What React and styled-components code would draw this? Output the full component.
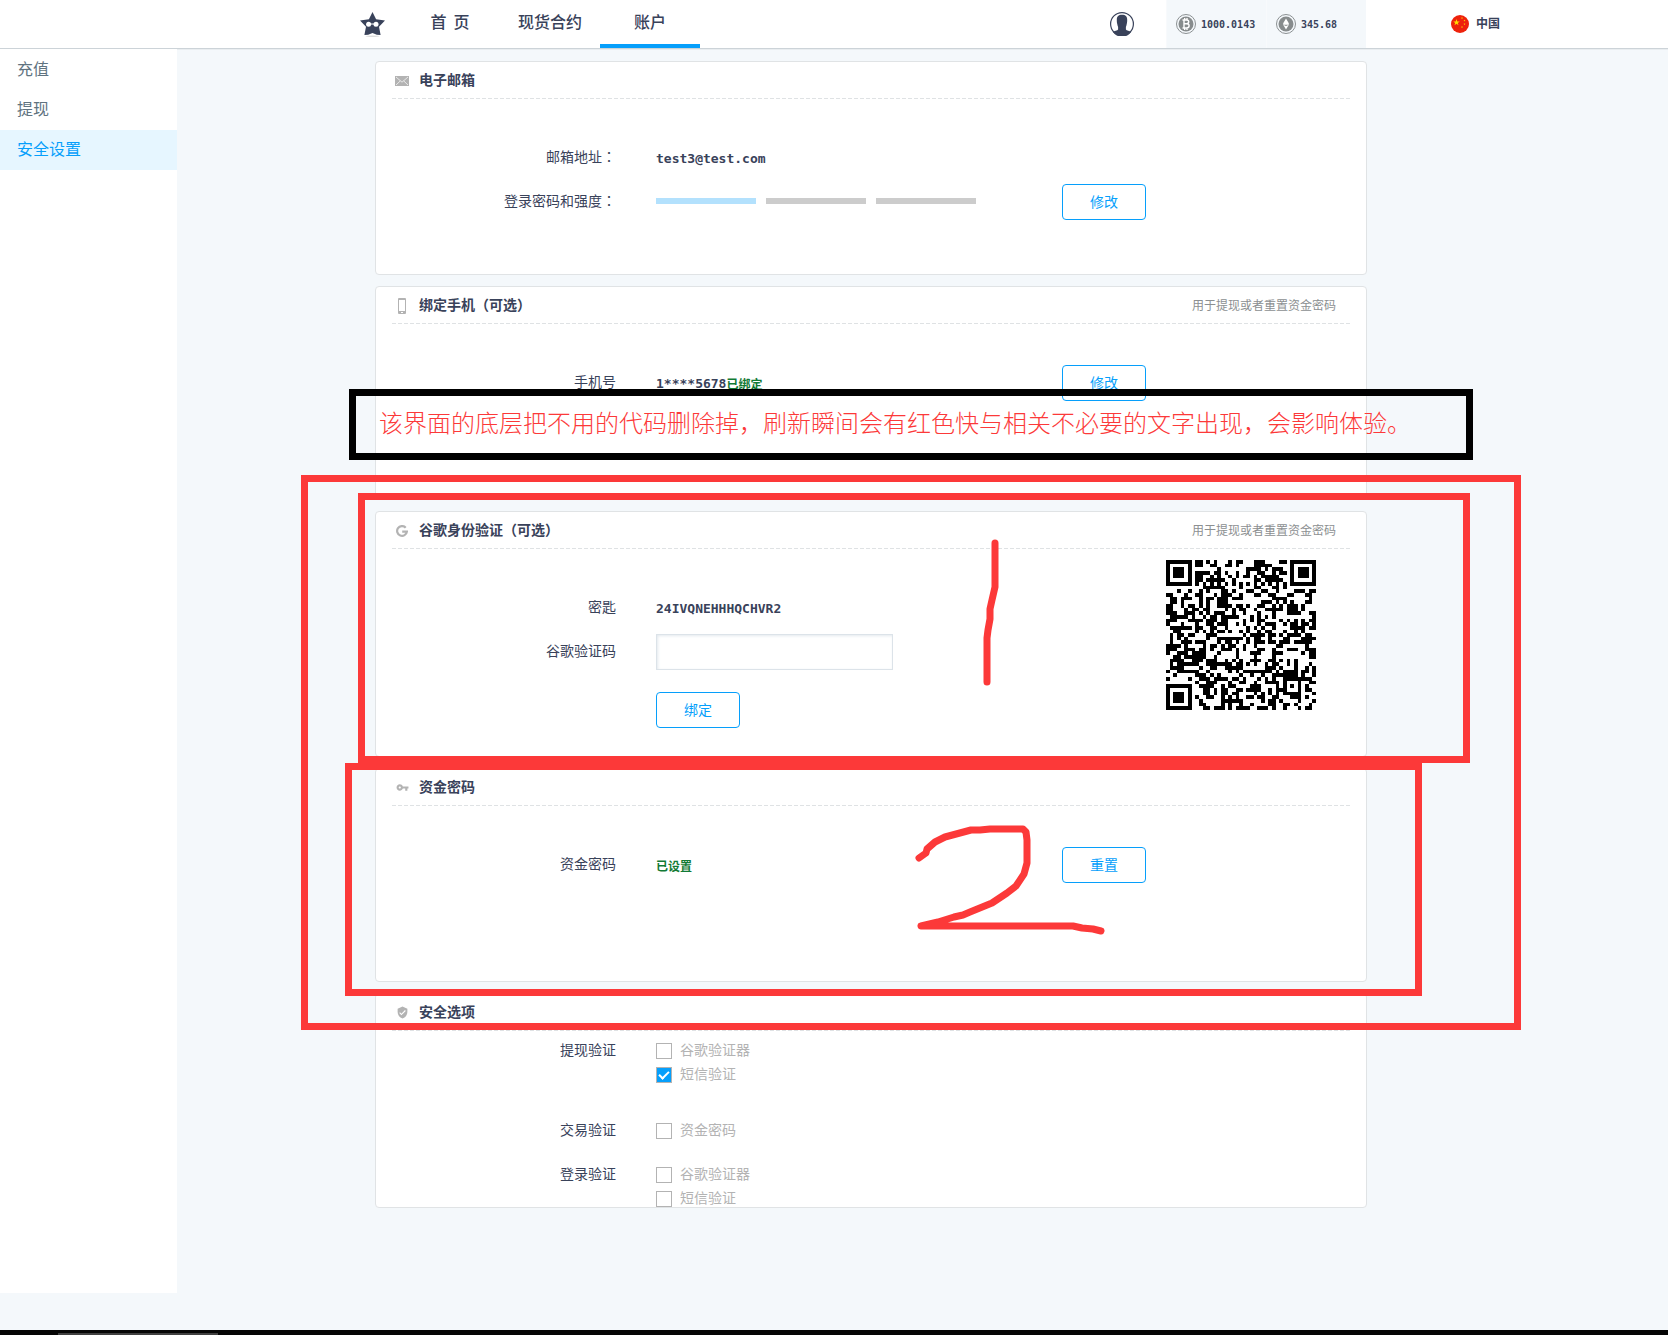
import React, { useState } from "react";
import styled, { createGlobalStyle } from "styled-components";

const ink = "#39425a";
const blue = "#069ffb";
const muted = "#b3b3b3";
const markRed = "#fc3939";

const GlobalStyle = createGlobalStyle`
  *, *::after { box-sizing: border-box; }
  body {
    margin: 0;
    background: #f4f8fb;
    color: ${ink};
    font-family: "Noto Sans CJK SC", "Liberation Sans", sans-serif;
    font-size: 14px;
  }
  button, input { font: inherit; }
  a { color: inherit; text-decoration: none; }
`;

/* ---------- QR code (version 6, error level H) ---------- */

const QR_SIZE = 41;
const QR_BLOCKS = 4;
const QR_DATA = 15;
const QR_EC = 28;

const EXP = [];
const LOG = [];
for (let i = 0, x = 1; i < 255; i++) {
  EXP[i] = x;
  LOG[x] = i;
  x <<= 1;
  if (x & 256) x ^= 0x11d;
}
const mul = (a, b) => (a && b ? EXP[(LOG[a] + LOG[b]) % 255] : 0);

function errorWords(data) {
  let gen = [1];
  for (let i = 0; i < QR_EC; i++) {
    const next = new Array(gen.length + 1).fill(0);
    gen.forEach((g, k) => {
      next[k] ^= g;
      next[k + 1] ^= mul(g, EXP[i]);
    });
    gen = next;
  }
  const rest = data.concat(new Array(QR_EC).fill(0));
  for (let i = 0; i < data.length; i++) {
    const f = rest[i];
    for (let k = 0; k < gen.length; k++) rest[i + k] ^= mul(gen[k], f);
  }
  return rest.slice(data.length);
}

function codewords(text) {
  let bits = "0100" + text.length.toString(2).padStart(8, "0");
  for (const ch of text) bits += ch.charCodeAt(0).toString(2).padStart(8, "0");
  bits += "0000";
  const words = bits.match(/.{8}/g).map((b) => parseInt(b, 2));
  for (let k = 0; words.length < QR_BLOCKS * QR_DATA; k++) words.push(k % 2 ? 0x11 : 0xec);
  const blocks = [];
  for (let b = 0; b < QR_BLOCKS; b++) blocks.push(words.slice(b * QR_DATA, (b + 1) * QR_DATA));
  const checks = blocks.map(errorWords);
  const out = [];
  for (let i = 0; i < QR_DATA; i++) blocks.forEach((b) => out.push(b[i]));
  for (let i = 0; i < QR_EC; i++) checks.forEach((b) => out.push(b[i]));
  return out;
}

const MASKS = [
  (i, j) => (i + j) % 2 === 0,
  (i) => i % 2 === 0,
  (i, j) => j % 3 === 0,
  (i, j) => (i + j) % 3 === 0,
  (i, j) => (Math.floor(i / 2) + Math.floor(j / 3)) % 2 === 0,
  (i, j) => ((i * j) % 2) + ((i * j) % 3) === 0,
  (i, j) => (((i * j) % 2) + ((i * j) % 3)) % 2 === 0,
  (i, j) => (((i * j) % 3) + ((i + j) % 2)) % 2 === 0,
];

function matrix(words, mask, draft) {
  const n = QR_SIZE;
  const m = Array.from({ length: n }, () => new Array(n).fill(null));
  const finder = (r0, c0) => {
    for (let r = -1; r < 8; r++)
      for (let c = -1; c < 8; c++) {
        if (r0 + r < 0 || r0 + r >= n || c0 + c < 0 || c0 + c >= n) continue;
        const d = Math.max(Math.abs(r - 3), Math.abs(c - 3));
        m[r0 + r][c0 + c] = d < 2 || d === 3;
      }
  };
  finder(0, 0);
  finder(n - 7, 0);
  finder(0, n - 7);
  for (let r = -2; r < 3; r++)
    for (let c = -2; c < 3; c++) m[34 + r][34 + c] = Math.max(Math.abs(r), Math.abs(c)) !== 1;
  for (let i = 8; i < n - 8; i++) {
    m[6][i] = i % 2 === 0;
    m[i][6] = i % 2 === 0;
  }
  const info = (2 << 3) | mask;
  let rem = info << 10;
  for (let i = 14; i >= 10; i--) if ((rem >> i) & 1) rem ^= 0x537 << (i - 10);
  const format = ((info << 10) | rem) ^ 0x5412;
  for (let i = 0; i < 15; i++) {
    const on = !draft && ((format >> i) & 1) === 1;
    m[i < 6 ? i : i < 8 ? i + 1 : n - 15 + i][8] = on;
    m[8][i < 8 ? n - i - 1 : i < 9 ? 7 : 14 - i] = on;
  }
  m[n - 8][8] = !draft;
  let bit = 0;
  let row = n - 1;
  let step = -1;
  for (let col = n - 1; col > 0; col -= 2) {
    if (col === 6) col--;
    for (; row >= 0 && row < n; row += step)
      for (let c = col; c > col - 2; c--) {
        if (m[row][c] !== null) continue;
        const dark = bit < words.length * 8 && ((words[bit >> 3] >> (7 - (bit & 7))) & 1) === 1;
        m[row][c] = dark !== MASKS[mask](row, c);
        bit++;
      }
    row -= step;
    step = -step;
  }
  return m;
}

function penalty(m) {
  const n = QR_SIZE;
  let lost = 0;
  let darkCount = 0;
  const run = [true, false, true, true, true, false, true];
  for (let r = 0; r < n; r++)
    for (let c = 0; c < n; c++) {
      let same = -1;
      for (let y = r - 1; y <= r + 1; y++)
        for (let x = c - 1; x <= c + 1; x++) if (m[y] && m[y][x] === m[r][c]) same++;
      if (same > 5) lost += same - 2;
      if (r < n - 1 && c < n - 1) {
        const sum = m[r][c] + m[r + 1][c] + m[r][c + 1] + m[r + 1][c + 1];
        if (sum === 0 || sum === 4) lost += 3;
      }
      if (c < n - 6 && run.every((v, k) => m[r][c + k] === v)) lost += 40;
      if (r < n - 6 && run.every((v, k) => m[r + k][c] === v)) lost += 40;
      if (m[r][c]) darkCount++;
    }
  return lost + (Math.abs((100 * darkCount) / n / n - 50) / 5) * 10;
}

function qrPath(text) {
  const words = codewords(text);
  const scores = MASKS.map((_, k) => penalty(matrix(words, k, true)));
  const best = scores.indexOf(Math.min(...scores));
  return matrix(words, best, false)
    .map((line, r) => line.map((on, c) => (on ? `M${c} ${r}h1v1h-1z` : "")).join(""))
    .join("");
}

const SECRET = "24IVQNEHHHQCHVR2";
const EMAIL = "test3@test.com";
const QR_PATH = qrPath(`otpauth://totp/${EMAIL}?secret=${SECRET}`);

function QrCode() {
  return (
    <svg width="150" height="150" viewBox="0 0 41 41" role="img" aria-label="QR">
      <path d={QR_PATH} fill="#000" shapeRendering="crispEdges" />
    </svg>
  );
}

/* ---------- icons ---------- */

const StarLogo = () => (
  <svg width="25" height="25" viewBox="0 0 25 25" aria-hidden="true">
    <ellipse cx="12.500" cy="24.200" rx="7" ry="0.800" fill="#dcdcdc" />
    <path
      d="M12.500 0l3.600 7.300 8.900 1.200-6 6.200 1.600 8.300-3.800-.2-4.300-1.700-4.300 1.700-3.800.2L6 14.700 0 8.500l8.900-1.200z"
      fill={ink}
    />
    <path d="M8 12h9" stroke="#fff" strokeWidth="1" />
    <circle cx="8.600" cy="12.300" r="2.500" fill="#fff" />
    <circle cx="16" cy="12.300" r="2.500" fill="#fff" />
  </svg>
);

const UserIcon = () => (
  <svg width="24" height="24" viewBox="0 0 24 24" aria-hidden="true">
    <circle cx="12" cy="12" r="11.400" fill="#fff" stroke={ink} strokeWidth="1.200" />
    <path
      d="M12 2.800c3.600 0 5.200 1.800 5.200 5 0 1.800-.1 3-.4 4-.2 1.400-.5 2.400-.9 3.200v2.600c.6 1.200 3.600 1.300 5.500 2.200A11.500 11.500 0 0 1 2.600 19.800c1.900-.9 4.900-1 5.500-2.200V15c-.4-.8-.7-1.800-.9-3.200-.3-1-.4-2.200-.4-4 0-3.200 1.600-5 5.200-5z"
      fill={ink}
    />
  </svg>
);

const CoinIcon = ({ children }) => (
  <svg width="20" height="20" viewBox="0 0 20 20" aria-hidden="true">
    <circle cx="10" cy="10" r="9.500" fill="none" stroke="#8b9092" />
    <circle cx="10" cy="10" r="7.500" fill="#878c8d" />
    {children}
  </svg>
);

const BitcoinMark = () => (
  <path
    d="M6.500 6h4.200c2.700 0 2.700 3.700 0 3.700H8M10.500 9.700c3.500 0 3.500 4.300 0 4.300h-4M8 6v8M8.700 4v2M11 4v2M8.700 14v2M11 14v2"
    fill="none"
    stroke="#fff"
    strokeWidth="1.400"
  />
);

const EtherMark = () => (
  <path d="M10 4.400l2.800 4.800-2.800 1.300-2.800-1.300zM10 15.600l-2.800-4.800 2.800 1.300 2.800-1.300z M7.200 9.200h5.600v1.600H7.200z" fill="#fff" />
);

const starPoints = (cx, cy, r) =>
  Array.from({ length: 10 }, (_, k) => {
    const a = (Math.PI / 5) * k - Math.PI / 2;
    const d = k % 2 ? r * 0.4 : r;
    return `${(cx + d * Math.cos(a)).toFixed(2)},${(cy + d * Math.sin(a)).toFixed(2)}`;
  }).join(" ");

const FlagIcon = () => (
  <svg width="18" height="18" viewBox="0 0 18 18" aria-hidden="true">
    <circle cx="9" cy="9" r="9" fill="#ee220c" />
    {[[5.5, 7.5, 3.4], [11, 3, 1.1], [13.5, 5.5, 1.1], [13.5, 9, 1.1], [11, 12, 1.1]].map(([x, y, r]) => (
      <polygon key={`${x}-${y}`} points={starPoints(x, y, r)} fill="#ffde00" />
    ))}
  </svg>
);

const MailIcon = () => (
  <svg width="14" height="10" viewBox="0 0 14 10" aria-hidden="true">
    <path d="M0 0h14v10H0z" fill={muted} />
    <path d="M1 1l6 5.200L13 1M1 9l4.200-4M13 9L8.800 5" fill="none" stroke="#fff" strokeWidth="0.700" />
  </svg>
);

const PhoneIcon = () => (
  <svg width="8" height="16" viewBox="0 0 8 16" aria-hidden="true">
    <rect width="8" height="16" rx="1" fill={muted} />
    <path d="M1 2h6v11H1zM3 14h2v1H3z" fill="#fff" />
  </svg>
);

const GoogleIcon = () => (
  <svg width="12" height="12" viewBox="0 0 12 12" aria-hidden="true">
    <path d="M9.700 2.700A4.900 4.900 0 1 0 10.900 6.600H6.200" fill="none" stroke={muted} strokeWidth="2.200" />
  </svg>
);

const KeyIcon = () => (
  <svg width="13" height="13" viewBox="0 0 24 24" fill={muted} aria-hidden="true">
    <path d="M12.650 10C11.830 7.670 9.610 6 7 6c-3.310 0-6 2.690-6 6s2.690 6 6 6c2.610 0 4.830-1.670 5.650-4H17v4h4v-4h2v-4H12.650zM7 14c-1.100 0-2-.9-2-2s.9-2 2-2 2 .9 2 2-.9 2-2 2z" />
  </svg>
);

const ShieldIcon = () => (
  <svg width="13" height="13" viewBox="0 0 24 24" fill={muted} aria-hidden="true">
    <path d="M12 1L3 5v6c0 5.550 3.840 10.740 9 12 5.160-1.260 9-6.450 9-12V5l-9-4zm-2 16l-4-4 1.410-1.410L10 14.170l6.590-6.590L18 9l-8 8z" />
  </svg>
);

/* ---------- layout ---------- */

const Page = styled.div`
  position: relative;
  display: flex;
  flex-direction: column;
  min-height: 100vh;
`;

const Header = styled.header`
  display: flex;
  align-items: center;
  height: 49px;
  padding: 0 168px 0 360px;
  background: #fff;
  border-bottom: 1px solid #ccd3d8;
  box-shadow: 0 1px 0 #e9edf0;
`;

const HomeLink = styled.a`
  display: flex;
  margin-right: 15px;
`;

const Nav = styled.nav`
  display: flex;
  align-self: stretch;
`;

const NavLink = styled.a`
  display: flex;
  align-items: center;
  justify-content: center;
  width: 100px;
  padding-bottom: 2px;
  border-bottom: 4px solid ${(p) => (p.$active ? blue : "transparent")};
  font-size: 16px;
  font-weight: 500;
  white-space: pre;
`;

const UserLink = styled.a`
  display: flex;
  margin-left: auto;
`;

const Balances = styled.div`
  display: flex;
  align-self: stretch;
  margin: 0 85px 0 32px;
`;

const Balance = styled.div`
  display: flex;
  align-items: center;
  gap: 5px;
  width: 100px;
  padding-left: 10px;
  background: #f4f8fb;
  box-shadow: inset 1px 0 0 #f8fafc;
  font-family: "DejaVu Sans Mono", monospace;
  font-size: 10px;
  font-weight: 700;
`;

const Locale = styled.a`
  display: flex;
  align-items: center;
  gap: 7px;
  font-size: 12px;
  font-weight: 700;
  line-height: 16px;
`;

const LocaleName = styled.span`
  padding-bottom: 2px;
`;

const Body = styled.div`
  display: flex;
  flex: 1;
  padding-bottom: 37px;
`;

const Sidebar = styled.aside`
  flex: none;
  width: 177px;
  padding-top: 1px;
  background: #fff;
`;

const SideLink = styled.a`
  display: block;
  padding: 0 0 4px 17px;
  background: ${(p) => (p.$active ? "#e6f6ff" : "transparent")};
  color: ${(p) => (p.$active ? blue : "#607380")};
  font-size: 16px;
  line-height: 36px;
`;

const Main = styled.main`
  display: flex;
  flex: 1;
  flex-direction: column;
  gap: 11px;
  max-width: 992px;
  margin-left: 198px;
  padding-top: 12px;
`;

const CardBox = styled.section`
  min-height: 214px;
  padding: 0 16px;
  background: #fff;
  border: 1px solid #e0e3e5;
  border-radius: 4px;
`;

const CardHead = styled.div`
  display: flex;
  align-items: center;
  height: 37px;
  padding-right: 14px;
  background: repeating-linear-gradient(90deg, #dfe2e4 0 4px, transparent 4px 6px) bottom / 100% 1px no-repeat;
`;

const IconSlot = styled.span`
  display: flex;
  justify-content: center;
  width: 20px;
  margin-right: 7px;
`;

const CardTitle = styled.h2`
  margin: 0;
  padding-bottom: 3px;
  font-size: 14px;
  font-weight: 700;
`;

const Hint = styled.span`
  margin-left: auto;
  padding-bottom: 3px;
  color: #8c8f91;
  font-size: 12px;
`;

const CardBody = styled.div`
  display: flex;
`;

const Form = styled.form`
  display: flex;
  flex: 1;
  flex-direction: column;
  gap: 8px;
  padding: 41px 0 28px;
`;

const Row = styled.div`
  display: grid;
  grid-template-columns: 264px minmax(0, 406px) auto;
  align-items: center;
  min-height: 36px;
`;

const Label = styled.label`
  padding: 0 40px 4px 0;
  line-height: 20px;
  text-align: right;
`;

/* The Traditional Chinese face centres its full-width colon. */
const Colon = styled.span`
  font-family: "Noto Sans CJK TC", sans-serif;
`;

const Value = styled.output`
  display: flex;
  align-items: center;
  font-family: "DejaVu Sans Mono", "Noto Sans CJK SC", monospace;
  font-size: 13px;
  font-weight: 700;
`;

const Status = styled.span`
  color: #127a35;
  font-family: "Noto Sans CJK SC", sans-serif;
  font-size: 12px;
`;

const Meter = styled.div`
  display: flex;
  gap: 10px;
  padding-bottom: 2px;
`;

const MeterBar = styled.span`
  width: 100px;
  height: 6px;
  background: ${(p) => (p.$on ? "#b3e1fd" : "#ccc")};
`;

const Button = styled.button`
  width: 84px;
  height: 36px;
  padding: 0 0 2px;
  background: #fff;
  border: 1px solid ${blue};
  border-radius: 4px;
  color: ${blue};
  cursor: pointer;
`;

const CodeInput = styled.input`
  width: 237px;
  height: 36px;
  padding: 0 10px;
  background: #fff;
  border: 1px solid #dce3e9;
  border-radius: 0;
  box-shadow: inset 1px 1px 3px #e3e9ee;
  color: ${ink};
`;

const SubmitRow = styled.div`
  padding: 14px 0 0 264px;
`;

const QrSlot = styled.div`
  padding: 11px 34px 0 0;
`;

const Options = styled.div`
  padding-top: 12px;
`;

const OptionGroup = styled.fieldset`
  display: grid;
  grid-template-columns: 264px 1fr;
  margin: 0;
  padding: 0 0 ${(p) => p.$space}px;
  border: 0;
`;

const GroupName = styled.div`
  margin-top: -2px;
  padding-right: 40px;
  line-height: 16px;
  text-align: right;
`;

const OptionList = styled.div`
  display: flex;
  flex-direction: column;
  gap: 8px;
`;

const OptionLabel = styled.label`
  display: flex;
  align-items: center;
  gap: 8px;
  height: 16px;
  color: ${muted};
  line-height: 16px;
`;

const OptionText = styled.span`
  padding-bottom: 4px;
`;

const Tick = styled.input`
  position: relative;
  width: 16px;
  height: 16px;
  margin: 0;
  appearance: none;
  background: #fff;
  border: 1px solid ${muted};

  &:checked { background: ${blue}; }
  &:checked::after {
    content: "";
    position: absolute;
    top: 3px;
    left: 2px;
    width: 10px;
    height: 6px;
    border: solid #fff;
    border-width: 0 0 2px 2px;
    transform: rotate(-45deg);
  }
`;

const BottomBar = styled.div`
  height: 5px;
  padding: 3px 0 0 58px;
  background: #050505;
`;

const BottomThumb = styled.div`
  width: 160px;
  height: 2px;
  background: #404040;
`;

/* ---------- review marks laid over the page ---------- */

const Marks = styled.div`
  position: absolute;
  inset: 0;
  pointer-events: none;
`;

const Frame = styled.div`
  position: absolute;
  top: ${(p) => p.$top}px;
  left: ${(p) => p.$left}px;
  width: ${(p) => p.$width}px;
  height: ${(p) => p.$height}px;
  border: 7px solid ${(p) => p.$color || markRed};
`;

const NoteText = styled.p`
  margin: 0;
  padding-left: 23px;
  color: ${markRed};
  font-size: 24px;
  font-weight: 300;
  line-height: 51px;
  white-space: nowrap;
`;

const Scribble = styled.svg`
  position: absolute;
  top: 0;
  left: 0;
  fill: none;
  stroke: ${markRed};
  stroke-width: 7px;
  stroke-linecap: round;
  stroke-linejoin: round;
`;

function Card({ icon, title, hint, children }) {
  return (
    <CardBox>
      <CardHead>
        <IconSlot>{icon}</IconSlot>
        <CardTitle>{title}</CardTitle>
        {hint && <Hint>{hint}</Hint>}
      </CardHead>
      {children}
    </CardBox>
  );
}

const GROUPS = [
  { name: "提现验证", space: 40, items: ["谷歌验证器", "短信验证"] },
  { name: "交易验证", space: 28, items: ["资金密码"] },
  { name: "登录验证", space: 0, items: ["谷歌验证器", "短信验证"] },
];

export default function App() {
  const [checked, setChecked] = useState({ "提现验证-短信验证": true });
  const [code, setCode] = useState("");
  const toggle = (key) => setChecked((s) => ({ ...s, [key]: !s[key] }));

  return (
    <Page>
      <GlobalStyle />
      <Header>
        <HomeLink href="#home" aria-label="首页"><StarLogo /></HomeLink>
        <Nav>
          <NavLink href="#home">首  页</NavLink>
          <NavLink href="#spot">现货合约</NavLink>
          <NavLink href="#account" $active>账户</NavLink>
        </Nav>
        <UserLink href="#account" aria-label="账户"><UserIcon /></UserLink>
        <Balances>
          <Balance><CoinIcon><BitcoinMark /></CoinIcon>1000.0143</Balance>
          <Balance><CoinIcon><EtherMark /></CoinIcon>345.68</Balance>
        </Balances>
        <Locale href="#locale"><FlagIcon /><LocaleName>中国</LocaleName></Locale>
      </Header>

      <Body>
        <Sidebar>
          <SideLink href="#deposit">充值</SideLink>
          <SideLink href="#withdraw">提现</SideLink>
          <SideLink href="#security" $active>安全设置</SideLink>
        </Sidebar>

        <Main>
          <Card icon={<MailIcon />} title="电子邮箱">
            <Form>
              <Row>
                <Label htmlFor="email">邮箱地址<Colon>：</Colon></Label>
                <Value id="email">{EMAIL}</Value>
              </Row>
              <Row>
                <Label as="span">登录密码和强度<Colon>：</Colon></Label>
                <Meter><MeterBar $on /><MeterBar /><MeterBar /></Meter>
                <Button type="button">修改</Button>
              </Row>
            </Form>
          </Card>

          <Card icon={<PhoneIcon />} title="绑定手机（可选）" hint="用于提现或者重置资金密码">
            <Form>
              <Row>
                <Label htmlFor="phone">手机号</Label>
                <Value id="phone">1****5678<Status>已绑定</Status></Value>
                <Button type="button">修改</Button>
              </Row>
            </Form>
          </Card>

          <Card icon={<GoogleIcon />} title="谷歌身份验证（可选）" hint="用于提现或者重置资金密码">
            <CardBody>
              <Form>
                <Row>
                  <Label htmlFor="secret">密匙</Label>
                  <Value id="secret">{SECRET}</Value>
                </Row>
                <Row>
                  <Label htmlFor="code">谷歌验证码</Label>
                  <CodeInput id="code" value={code} onChange={(e) => setCode(e.target.value)} />
                </Row>
                <SubmitRow><Button type="button">绑定</Button></SubmitRow>
              </Form>
              <QrSlot><QrCode /></QrSlot>
            </CardBody>
          </Card>

          <Card icon={<KeyIcon />} title="资金密码">
            <Form>
              <Row>
                <Label htmlFor="fund">资金密码</Label>
                <Value id="fund"><Status>已设置</Status></Value>
                <Button type="button">重置</Button>
              </Row>
            </Form>
          </Card>

          <Card icon={<ShieldIcon />} title="安全选项">
            <Options>
              {GROUPS.map((g) => (
                <OptionGroup key={g.name} $space={g.space} aria-label={g.name}>
                  <GroupName>{g.name}</GroupName>
                  <OptionList>
                    {g.items.map((item) => {
                      const key = `${g.name}-${item}`;
                      return (
                        <OptionLabel key={key}>
                          <Tick type="checkbox" checked={!!checked[key]} onChange={() => toggle(key)} />
                          <OptionText>{item}</OptionText>
                        </OptionLabel>
                      );
                    })}
                  </OptionList>
                </OptionGroup>
              ))}
            </Options>
          </Card>
        </Main>
      </Body>

      <BottomBar><BottomThumb /></BottomBar>

      <Marks>
        <Frame $top={389} $left={349} $width={1124} $height={71} $color="#000">
          <NoteText>该界面的底层把不用的代码删除掉，刷新瞬间会有红色快与相关不必要的文字出现，会影响体验。</NoteText>
        </Frame>
        <Frame $top={475} $left={301} $width={1220} $height={555} />
        <Frame $top={493} $left={358} $width={1112} $height={270} />
        <Frame $top={763} $left={345} $width={1077} $height={233} />
        <Scribble width="1200" height="960" viewBox="0 0 1200 960" aria-hidden="true">
          <path d="M995 543V587L992 600 990 609V619L988 630 987 638V682" />
          <path d="M919 858L926 853 927 849 935 842 945 837 971 830 980 830 990 829H1023L1026 832 1027 840V863L1024 874 1016 886 1007 893 992 903 970 912 963 915 954 917 938 922 921 926H1073L1082 928 1093 929 1101 931" />
        </Scribble>
      </Marks>
    </Page>
  );
}
